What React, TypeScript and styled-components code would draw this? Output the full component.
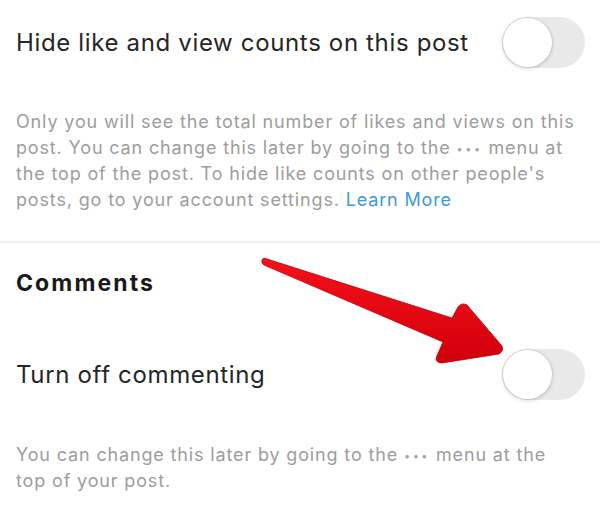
import React from 'react';
import styled, { createGlobalStyle } from 'styled-components';

const GlobalStyle = createGlobalStyle`
    html, body {
        margin: 0;
        padding: 0;
        background: #ffffff;
    }
    body {
        font-family: Inter, 'Liberation Sans', Arial, sans-serif;
        -webkit-font-smoothing: antialiased;
    }
`;

interface SpacedProps {
    top: number;
}

const Page = styled.div`
    position: relative;
    width: 600px;
    height: 515px;
    overflow: hidden;
    background: #ffffff;
`;

const Section = styled.div<SpacedProps>`
    padding: ${props => props.top}px 15px 0 16px;
`;

const ToggleRow = styled.div`
    display: flex;
    align-items: center;
    justify-content: space-between;
    height: 51px;
`;

const RowLabel = styled.span`
    color: #262626;
    font-size: 24px;
    letter-spacing: 0.65px;
    margin-top: -1px;
`;

const SectionTitle = styled.div`
    color: #1a1a1a;
    font-size: 23px;
    font-weight: 700;
    line-height: 26px;
    letter-spacing: 2.1px;
`;

const Description = styled.p<SpacedProps>`
    margin: ${props => props.top}px 0 0;
    color: #9d9d9d;
    font-size: 18px;
    line-height: 26px;
    letter-spacing: 0.85px;
    white-space: nowrap;
`;

const Dots = styled.span`
    display: inline-block;
    font-size: 11px;
    line-height: 1;
    letter-spacing: 2.5px;
    vertical-align: middle;
    color: #a5a5a5;
`;

const LearnMore = styled.a`
    color: #3d9ad6;
    text-decoration: none;
`;

const Divider = styled.div`
    height: 2px;
    background: #efefef;
    margin-top: 28px;
`;

const Track = styled.div`
    position: relative;
    width: 83px;
    height: 51px;
    border-radius: 26px;
    background: #e9e9ea;
    flex-shrink: 0;
`;

const Knob = styled.div`
    position: absolute;
    top: 1px;
    left: 1px;
    width: 49px;
    height: 49px;
    border-radius: 50%;
    background: #ffffff;
    box-shadow: 0 1px 4px rgba(0, 0, 0, 0.18), 0 0 0 1px rgba(0, 0, 0, 0.06);
`;

const ArrowOverlay = styled.svg`
    position: absolute;
    left: 0;
    top: 0;
    pointer-events: none;
`;

const Toggle = () => (
    <Track>
        <Knob />
    </Track>
);

const Ellipsis = () => <Dots>•••</Dots>;

const App = () => {
    return (
        <Page>
            <GlobalStyle />
            <Section top={17}>
                <ToggleRow>
                    <RowLabel>Hide like and view counts on this post</RowLabel>
                    <Toggle />
                </ToggleRow>
                <Description top={41}>
                    Only you will see the total number of likes and views on this
                    <br />
                    post. You can change this later by going to the <Ellipsis /> menu at
                    <br />
                    the top of the post. To hide like counts on other people's
                    <br />
                    posts, go to your account settings. <LearnMore>Learn More</LearnMore>
                </Description>
            </Section>
            <Divider />
            <Section top={27}>
                <SectionTitle>Comments</SectionTitle>
            </Section>
            <Section top={53}>
                <ToggleRow>
                    <RowLabel>Turn off commenting</RowLabel>
                    <Toggle />
                </ToggleRow>
                <Description top={42}>
                    You can change this later by going to the <Ellipsis /> menu at the
                    <br />
                    top of your post.
                </Description>
            </Section>
            <ArrowOverlay width="600" height="515" viewBox="0 0 600 515">
                <defs>
                    <linearGradient id="arrowRed" x1="0" y1="0" x2="0" y2="1">
                        <stop offset="0" stopColor="#f5101a" />
                        <stop offset="1" stopColor="#d0000c" />
                    </linearGradient>
                </defs>
                <path
                    d="M262 260 Q263 257 267 259 L452 318 L458 307 Q462 302 467 305 L502 346 Q504 351 499 354 L442 363 Q436 363 436 358 L443 342 L264 265 Q261 263 262 260 Z"
                    fill="url(#arrowRed)"
                    stroke="#bf000a"
                    strokeWidth="0.8"
                    strokeLinejoin="round"
                />
            </ArrowOverlay>
        </Page>
    );
};

export default App;
